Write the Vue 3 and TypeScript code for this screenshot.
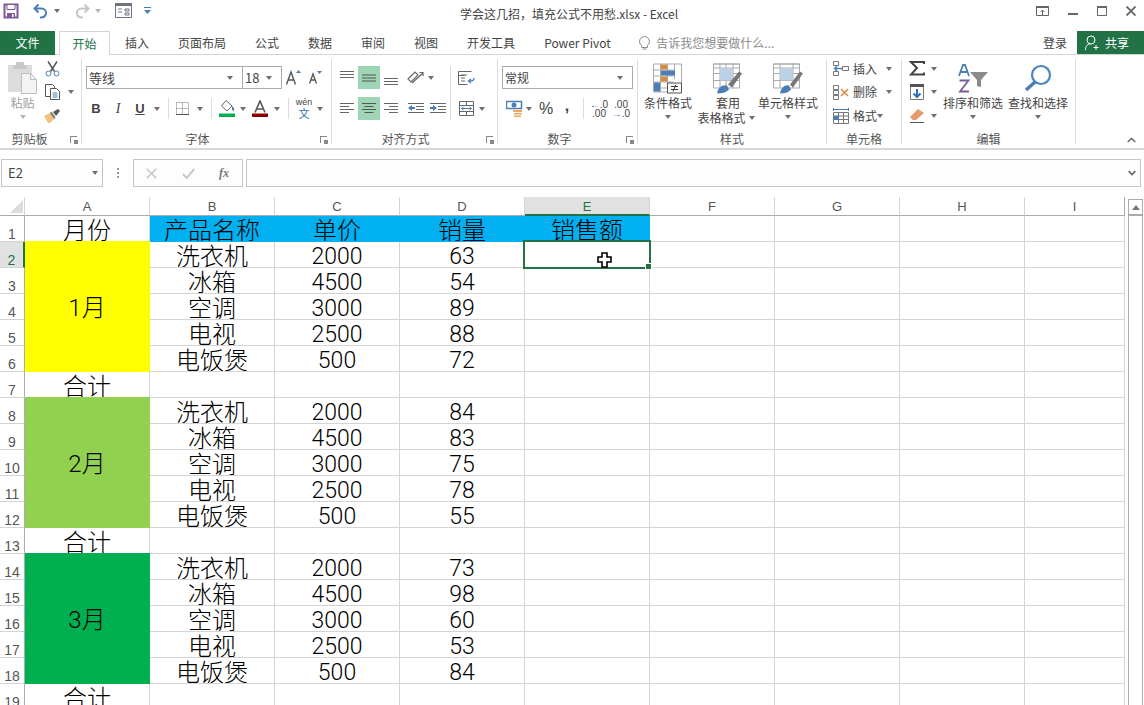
<script setup lang="ts">
interface Cell { t: string; cls: string }
const cols = ['A', 'B', 'C', 'D', 'E', 'F', 'G', 'H', 'I']
const goods = [['洗衣机', '2000'], ['冰箱', '4500'], ['空调', '3000'], ['电视', '2500'], ['电饭煲', '500']]
const sales = [[63, 54, 89, 88, 72], [84, 83, 75, 78, 55], [73, 98, 60, 53, 84]]
const fills = ['yellow', 'lime', 'green']
const rows: { n: number; cells: Cell[] }[] = []
const blank = (k: number): Cell[] => Array.from({ length: k }, () => ({ t: '', cls: '' }))
rows.push({
  n: 1,
  cells: [
    { t: '月份', cls: '' },
    { t: '产品名称', cls: 'blue' },
    { t: '单价', cls: 'blue' },
    { t: '销量', cls: 'blue' },
    { t: '销售额', cls: 'blue' },
    ...blank(4),
  ],
})
let n = 2
sales.forEach((m, i) => {
  m.forEach((s, j) => {
    const head: Cell[] = j === 0 ? [{ t: `${i + 1}月`, cls: `merged ${fills[i]}` }] : []
    rows.push({
      n: n,
      cells: [
        ...head,
        { t: goods[j][0], cls: '' },
        { t: goods[j][1], cls: 'num' },
        { t: String(s), cls: 'num' },
        { t: '', cls: n === 2 ? 'active' : '' },
        ...blank(4),
      ],
    })
    n++
  })
  rows.push({ n: n, cells: [{ t: '合计', cls: '' }, ...blank(8)] })
  n++
})
const tabs = ['插入', '页面布局', '公式', '数据', '审阅', '视图', '开发工具', 'Power Pivot']
</script>

<template>
  <div class="app">
    <header class="titlebar">
      <div class="qat">
        <svg class="q-save" width="16" height="16" viewBox="0 0 16 16"><path d="M1.500 1.500h13v13h-13z" fill="none" stroke="#7d5a94" stroke-width="2"/><path d="M4 1.500h8v5H4z" fill="#fff" stroke="#7d5a94"/><path d="M4 10h8v5H4z" fill="#7d5a94"/><path d="M9 11h1.600v3H9z" fill="#fff"/></svg>
        <svg class="q-undo" width="16" height="16" viewBox="0 0 16 16"><path d="M5.500 1.500 1.500 5.500l4 4M2 5.500h6.500c6 0 6 8.500 0 9H7" fill="none" stroke="#4a7eb5" stroke-width="2"/></svg>
        <i class="caret q-c1"></i>
        <svg class="q-redo" width="16" height="16" viewBox="0 0 16 16"><path d="M10.500 1.500l4 4-4 4M14 5.500H7.500c-6 0-6 8.500 0 9H9" fill="none" stroke="#c6c6c6" stroke-width="2"/></svg>
        <i class="caret light q-c2"></i>
        <svg class="q-form" width="17" height="15" viewBox="0 0 17 15"><path d="M.500.500h16v14H.500z" fill="#fff" stroke="#6b7480"/><path d="M0 0h17v3H0z" fill="#6b7480"/><path d="M3 6h4M3 9h4M10 6h4v2h-4zM10 10h4v2h-4z" fill="none" stroke="#6b7480"/></svg>
        <svg class="q-more" width="7" height="8" viewBox="0 0 7 8"><path d="M0 .500h7" stroke="#4a7eb5"/><path d="M0 3h7L3.500 7z" fill="#4a7eb5"/></svg>
      </div>
      <div class="title">学会这几招，填充公式不用愁.xlsx - Excel</div>
      <div class="winctl">
        <svg width="13" height="10" viewBox="0 0 13 10"><path d="M.500.500h12v9H.500z" fill="none" stroke="#666"/><path d="M0 0h13v2H0z" fill="#666"/><path d="M6.500 9V4M4.500 6l2-2 2 2" fill="none" stroke="#666"/></svg>
        <svg width="10" height="10" viewBox="0 0 10 10"><path d="M0 7h10v2H0z" fill="#666"/></svg>
        <svg width="10" height="10" viewBox="0 0 10 10"><path d="M.500.500h9v9h-9z" fill="none" stroke="#666"/><path d="M0 0h10v2H0z" fill="#666"/></svg>
        <svg width="10" height="10" viewBox="0 0 10 10"><path d="M.500.500l9 9M9.500.500l-9 9" fill="none" stroke="#666" stroke-width="1.800"/></svg>
      </div>
    </header>

    <nav class="tabbar">
      <div class="file">文件</div>
      <div class="tab on">开始</div>
      <div v-for="t in tabs" :key="t" class="tab">{{ t }}</div>
      <div class="tell">
        <svg width="11" height="14" viewBox="0 0 11 14"><path d="M5.500.500a5 5 0 0 0-3 9v2h6v-2a5 5 0 0 0-3-9zM3.500 13h4" fill="none" stroke="#8a8a8a"/></svg>
        <span>告诉我您想要做什么...</span>
      </div>
      <div class="login">登录</div>
      <div class="share">
        <svg width="15" height="16" viewBox="0 0 15 16"><circle cx="6" cy="5" r="4" fill="none" stroke="#fff"/><path d="M.500 15c0-4 2-6 5-6M11 10v5M8.500 12.500h5" fill="none" stroke="#fff"/></svg>
        <span>共享</span>
      </div>
    </nav>

    <section class="ribbon">
      <!-- clipboard -->
      <div class="group g-clip">
        <div class="body">
          <div class="big paste">
            <svg width="30" height="33" viewBox="0 0 30 33"><path d="M0 3h24v27H0z" fill="#dcdcdc"/><path d="M8 0h8v3h3v4H5V3h3z" fill="#c8c8c8"/><path d="M13.500 11.500h9l6 6v14h-15z" fill="#f3f3f3" stroke="#bdbdbd"/><path d="M22.500 11.500v6h6" fill="none" stroke="#bdbdbd"/></svg>
            <span class="muted">粘贴</span>
            <i class="caret light under"></i>
          </div>
          <div class="stack">
            <div class="row"><div class="w16">
              <svg width="15" height="16" viewBox="0 0 15 16"><path d="M3 .500l6.500 10M12 .500 5.500 10.500" stroke="#555" fill="none" stroke-width="1.500"/><circle cx="3.500" cy="12.500" r="2.500" fill="#fff" stroke="#4a7eb5"/><circle cx="11.500" cy="12.500" r="2.500" fill="#fff" stroke="#4a7eb5"/></svg>
            </div></div>
            <div class="row"><div class="w16">
              <svg width="15" height="16" viewBox="0 0 15 16"><path d="M.500.500h7l2 2v10H.500z" fill="#fff" stroke="#555"/><path d="M5.500 4.500h6l3 3v8h-9z" fill="#fff" stroke="#555"/><path d="M7.500 9h5M7.500 11h5M7.500 13h5" stroke="#4a7eb5"/></svg>
            </div><div class="w8"></div><i class="caret"></i></div>
            <div class="row"><div class="w16">
              <svg width="16" height="14" viewBox="0 0 16 14"><path d="M0 7l6-3 4 6-4 4H4z" fill="#f3c27d"/><path d="M6 4l4 6 1.500-1.500-4-6z" fill="#777"/><path d="M9 3l5-3 2 2-4 5z" fill="#555"/></svg>
            </div></div>
          </div>
        </div>
        <div class="label lb-clip">剪贴板</div>
        <i class="launch"></i>
      </div>

      <!-- font -->
      <div class="group g-font">
        <div class="body two">
          <div class="row h23">
            <div class="box fontname"><span>等线</span><i class="caret"></i></div>
            <div class="box fontsize"><span>18</span><i class="caret"></i></div>
            <div class="w22">
              <svg width="16" height="15" viewBox="0 0 16 15"><path d="M.500 14.500 5 2l4.500 12.500M2 10h6" fill="none" stroke="#555" stroke-width="1.400"/><path d="M10 3l2.500-3L15 3z" fill="#4a7eb5"/></svg>
            </div>
            <div class="w22">
              <svg width="14" height="13" viewBox="0 0 14 13"><path d="M.500 12.500 4 3l3.500 9.500M1.800 9h4.400" fill="none" stroke="#555" stroke-width="1.300"/><path d="M8 0h5l-2.500 3z" fill="#4a7eb5"/></svg>
            </div>
          </div>
          <div class="row h23 tools">
            <div class="w20 ch b">B</div>
            <div class="w24 ch i">I</div>
            <div class="w20 ch u">U</div>
            <div class="w14"><i class="caret"></i></div>
            <div class="w8"><i class="sep"></i></div>
            <div class="w20">
              <svg width="13" height="13" viewBox="0 0 13 13"><path d="M.500.500h12v12H.500zM6.500.500v12M.500 6.500h12" fill="none" stroke="#777" stroke-dasharray="1 1"/><path d="M0 12.500h13" stroke="#555"/></svg>
            </div>
            <div class="w16"><i class="caret"></i></div>
            <div class="w6"><i class="sep"></i></div>
            <div class="w26">
              <svg width="16" height="17" viewBox="0 0 16 17"><path d="M7 .500l6 5.500-5 5L2.500 6z" fill="#fff" stroke="#666"/><path d="M13 6c2 1 2.500 3 2 5l-2-1z" fill="#4a7eb5"/><path d="M0 13.500h16V17H0z" fill="#00b050"/></svg>
            </div>
            <div class="w6"><i class="caret"></i></div>
            <div class="w28">
              <svg width="16" height="17" viewBox="0 0 16 17"><path d="M3 12.500 8 1l5 11.500M4.500 9h7" fill="none" stroke="#555" stroke-width="1.600"/><path d="M0 13.500h16V17H0z" fill="#8b0000"/></svg>
            </div>
            <div class="w6"><i class="caret"></i></div>
            <div class="w16"><i class="sep"></i></div>
            <div class="w16 wen"><span>wén</span><b>文</b></div>
            <div class="w16"><i class="caret"></i></div>
          </div>
        </div>
        <div class="label lb-font">字体</div>
        <i class="launch"></i>
      </div>

      <!-- alignment -->
      <div class="group g-align">
        <div class="body split">
          <div class="two">
            <div class="row h23">
              <div class="w22"><svg width="14" height="14" viewBox="0 0 14 14"><path d="M0 .500h14M0 3.500h14M0 6.500h14" stroke="#666" fill="none"/></svg></div>
              <div class="w22 hl"><svg width="14" height="8" viewBox="0 0 14 8"><path d="M0 1h14M0 4h14M0 7h14" stroke="#555" fill="none"/></svg></div>
              <div class="w22"><svg width="14" height="14" viewBox="0 0 14 14"><path d="M0 7.500h14M0 10.500h14M0 13.500h14" stroke="#666" fill="none"/></svg></div>
              <div class="w26"><svg width="17" height="15" viewBox="0 0 17 15"><path d="M1 9l7-7 3 3-7 7zM5 13 16 3M12.500 2.500H16V6" fill="none" stroke="#666" stroke-width="1.200"/></svg></div>
              <div class="w6"><i class="caret"></i></div>
            </div>
            <div class="row h23">
              <div class="w22"><svg width="14" height="11" viewBox="0 0 14 11"><path d="M0 .500h14M0 3.500h9M0 6.500h14M0 9.500h9" stroke="#666" fill="none"/></svg></div>
              <div class="w22 hl"><svg width="14" height="11" viewBox="0 0 14 11"><path d="M0 .500h14M2.500 3.500h9M0 6.500h14M2.500 9.500h9" stroke="#555" fill="none"/></svg></div>
              <div class="w22"><svg width="14" height="11" viewBox="0 0 14 11"><path d="M0 .500h14M5 3.500h9M0 6.500h14M5 9.500h9" stroke="#666" fill="none"/></svg></div>
              <div class="w28"><svg width="16" height="11" viewBox="0 0 16 11"><path d="M0 .500h16M8 3.500h8M8 6.500h8M0 9.500h16" stroke="#666" fill="none"/><path d="M0 5l4-3v2h3v2H4v2z" fill="#4a7eb5"/></svg></div>
              <div class="w16"><svg width="16" height="11" viewBox="0 0 16 11"><path d="M0 .500h16M8 3.500h8M8 6.500h8M0 9.500h16" stroke="#666" fill="none"/><path d="M7 5 3 2v2H0v2h3v2z" fill="#4a7eb5"/></svg></div>
            </div>
          </div>
          <div class="w8 tall"><i class="sep long"></i></div>
          <div class="two">
            <div class="row h23">
              <div class="w24"><svg width="17" height="14" viewBox="0 0 17 14"><path d="M.500.500h13M.500 4.500h6M.500.500v13h9M3 4h6M3 7h4M3 10h4" fill="none" stroke="#666"/><path d="M16 7c0 3-2 3-5 3M13 8l-2.500 2 2.500 2" fill="none" stroke="#4a7eb5" stroke-width="1.300"/></svg></div>
            </div>
            <div class="row h23">
              <div class="w24"><svg width="15" height="15" viewBox="0 0 15 15"><path d="M.500.500h14v14H.500zM.500 4.500h14M.500 10.500h14M7.500.500v4M7.500 10.500v4" fill="none" stroke="#666"/><path d="M2.500 7.500h10M4.500 6l-2 1.500 2 1.500M10.500 6l2 1.500-2 1.500" fill="none" stroke="#4a7eb5"/></svg></div>
              <div class="w8"><i class="caret"></i></div>
            </div>
          </div>
        </div>
        <div class="label lb-align">对齐方式</div>
        <i class="launch"></i>
      </div>

      <!-- number -->
      <div class="group g-num">
        <div class="body two">
          <div class="row h23">
            <div class="box numfmt"><span>常规</span><i class="caret"></i></div>
          </div>
          <div class="row h23">
            <div class="w24"><svg width="17" height="17" viewBox="0 0 17 17"><path d="M.500 1.500h15v7H.500z" fill="#fff" stroke="#4a7eb5" stroke-width="1.500"/><circle cx="8" cy="5" r="2.500" fill="#4a7eb5"/><path d="M7 10h9v2H7zM8 13h8v1.500H8zM8 15.500h7V17H8z" fill="#f0a860"/></svg></div>
            <div class="w6"><i class="caret"></i></div>
            <div class="w28 pct">%</div>
            <div class="w14 comma">,</div>
            <div class="w18"><i class="sep"></i></div>
            <div class="w14 dec"><span><em>←</em>.0</span><span>.00</span></div>
            <div class="w8"></div>
            <div class="w14 dec"><span>.00</span><span><em>→</em>.0</span></div>
          </div>
        </div>
        <div class="label lb-num">数字</div>
        <i class="launch"></i>
      </div>

      <!-- styles -->
      <div class="group g-style">
        <div class="body">
          <div class="big w60">
            <svg width="30" height="30" viewBox="0 0 30 30"><path d="M.500.500h28v28H.500zM.500 6.500h20M.500 12.500h20M.500 18.500h20M.500 24.500h20M7.500.500v28M14.500.500v20M21.500.500v15" fill="none" stroke="#aaa"/><path d="M8 1h6v5H8zM8 13h6v5H8z" fill="#d98b3a"/><path d="M8 7h14v5H8zM1 19h6v9H1z" fill="#4a7eb5"/><path d="M14.500 19.500h14v10h-14z" fill="#fff" stroke="#555"/><path d="M18 23h7M18 26h7M23 21l-3 7" fill="none" stroke="#333"/></svg>
            <span>条件格式</span>
            <i class="caret under"></i>
          </div>
          <div class="big w60">
            <svg width="30" height="30" viewBox="0 0 30 30"><path d="M.500.500h26v24H.500z" fill="#fff" stroke="#aaa"/><path d="M.500.500h26v4H.500zM.500 10h26M.500 17h26M7 .500v24M13 .500v24M20 .500v24" fill="none" stroke="#aaa"/><path d="M7 5h13v12H7z" fill="#bcd0e6"/><path d="M4 30c1-6 5-9 10-8l2 4c-3 3-7 4-12 4z" fill="#4a7eb5"/><path d="M15 21 26 8l3 2-10 14z" fill="#777"/></svg>
            <span>套用</span>
            <span class="wrapc">表格格式<i class="caret"></i></span>
          </div>
          <div class="big w60">
            <svg width="30" height="30" viewBox="0 0 30 30"><path d="M.500.500h26v24H.500z" fill="#fff" stroke="#aaa"/><path d="M.500.500h26v4H.500zM.500 10h26M.500 17h26M7 .500v24M20 .500v24" fill="none" stroke="#aaa"/><path d="M7 5h13v12H7z" fill="#bcd0e6"/><path d="M7 30c1-6 5-9 9-8l2 4c-3 3-6 4-11 4z" fill="#4a7eb5"/><path d="M17 21 27 8l3 2-10 14z" fill="#777"/></svg>
            <span>单元格样式</span>
            <i class="caret under"></i>
          </div>
        </div>
        <div class="label">样式</div>
      </div>

      <!-- cells -->
      <div class="group g-cells">
        <div class="body">
          <div class="stack wide">
            <div class="row"><svg width="16" height="15" viewBox="0 0 16 15"><path d="M.500.500h5v4h-5zM.500 10.500h5v4h-5zM9.500 5.500h6v4h-6z" fill="#fff" stroke="#777"/><path d="M9 7.500H2M4 5 1.500 7.500 4 10" fill="none" stroke="#4a7eb5" stroke-width="1.400"/></svg><span class="txt">插入</span><i class="caret"></i></div>
            <div class="row"><svg width="16" height="15" viewBox="0 0 16 15"><path d="M.500.500h5v4h-5zM.500 10.500h5v4h-5zM.500 5.500h5v4h-5z" fill="#fff" stroke="#777"/><path d="M8 4l7 7M15 4l-7 7" fill="none" stroke="#dd8a4a" stroke-width="1.600"/></svg><span class="txt">删除</span><i class="caret"></i></div>
            <div class="row"><svg width="16" height="16" viewBox="0 0 16 16"><path d="M.500 4.500h15v11H.500zM.500 8h15M.500 11.500h15M5.500 4.500v11M10.500 4.500v11" fill="none" stroke="#777"/><path d="M1 8h5v4H1z" fill="#4a7eb5"/><path d="M.500 1.500h15M.500 0v3M15.500 0v3" stroke="#4a7eb5" fill="none"/></svg><span class="txt">格式</span><i class="caret narrow"></i></div>
          </div>
        </div>
        <div class="label">单元格</div>
      </div>

      <!-- editing -->
      <div class="group g-edit">
        <div class="body">
          <div class="stack short">
            <div class="row"><div class="w20"><svg width="16" height="15" viewBox="0 0 16 15"><path d="M15 3V1H2l6 6-6 6.500h13v-2" fill="none" stroke="#444" stroke-width="2"/></svg></div><div class="w14c"><i class="caret"></i></div></div>
            <div class="row"><div class="w20"><svg width="14" height="16" viewBox="0 0 14 16"><path d="M.500.500h13v15H.500z" fill="#fff" stroke="#777"/><path d="M0 0h14v3H0z" fill="#555"/><path d="M7 5v8M3.500 9.500 7 13l3.500-3.500" fill="none" stroke="#2f70b8" stroke-width="2"/></svg></div><div class="w14c"><i class="caret"></i></div></div>
            <div class="row"><div class="w20"><svg width="15" height="14" viewBox="0 0 15 14"><path d="M0 8l8-8 6 4-8 7H3z" fill="#e59a6c"/><path d="M0 13.500h14" stroke="#555"/></svg></div><div class="w14c"><i class="caret"></i></div></div>
          </div>
          <div class="big w60 sort">
            <svg width="30" height="29" viewBox="0 0 30 29"><path d="M1 12 5 1h2l4 11M3 8h6" fill="none" stroke="#4a7eb5" stroke-width="1.800"/><path d="M1.500 16.500h9L2 27.500h9" fill="none" stroke="#7d5a94" stroke-width="1.800"/><path d="M12 8h18l-7 8v7l-4-1v-6z" fill="#8a8a8a"/></svg>
            <span>排序和筛选</span>
            <i class="caret under"></i>
          </div>
          <div class="big w60 find">
            <svg width="28" height="29" viewBox="0 0 28 29"><circle cx="17" cy="11" r="9" fill="none" stroke="#4a87c0" stroke-width="2.200"/><path d="M11 18 2 26" stroke="#4a7eb5" stroke-width="3.500"/></svg>
            <span>查找和选择</span>
            <i class="caret under"></i>
          </div>
        </div>
        <div class="label">编辑</div>
      </div>

      <svg class="collapse" width="9" height="6" viewBox="0 0 9 6"><path d="M.700 5 4.500 1.500 8.300 5" fill="none" stroke="#666" stroke-width="1.500"/></svg>
    </section>

    <section class="fbar">
      <div class="namebox"><span>E2</span><i class="caret"></i></div>
      <div class="dots"><i></i><i></i><i></i></div>
      <div class="fbtns">
        <svg width="11" height="11" viewBox="0 0 11 11"><path d="M.700.700l9.600 9.600M10.300.700.700 10.300" stroke="#c8c8c8" stroke-width="1.600" fill="none"/></svg>
        <svg width="13" height="11" viewBox="0 0 13 11"><path d="M.800 6l4 4L12.300.800" stroke="#c8c8c8" stroke-width="2" fill="none"/></svg>
        <span class="fx">fx</span>
      </div>
      <div class="finput">
        <svg width="8" height="6" viewBox="0 0 8 6"><path d="M.700 1 4 4.500 7.300 1" fill="none" stroke="#666" stroke-width="1.800"/></svg>
      </div>
    </section>

    <section class="sheet">
      <div class="grid">
        <div class="hd corner"><svg width="13" height="13" viewBox="0 0 13 13"><path d="M13 0v13H0z" fill="#dcdcdc"/></svg></div>
        <div v-for="c in cols" :key="c" class="hd col" :class="{ cur: c === 'E' }">{{ c }}</div>
        <template v-for="r in rows" :key="r.n">
          <div class="hd rown" :class="{ cur: r.n === 2 }">{{ r.n }}</div>
          <div v-for="(c, i) in r.cells" :key="i" class="cell" :class="c.cls">
            <span>{{ c.t }}</span>
            <template v-if="c.cls === 'active'">
              <div class="selbox"><i class="handle"></i></div>
              <svg class="xhair" width="15" height="16" viewBox="0 0 15 16"><path d="M5 1h5v4h4v5h-4v5H5v-5H1V5h4z" fill="#fff" stroke="#000" stroke-width="1.600"/></svg>
            </template>
          </div>
        </template>
      </div>
      <aside class="vscroll">
        <div class="up"><i></i></div>
      </aside>
    </section>
  </div>
</template>

<style scoped>
.app {
  width: 1144px;
  height: 705px;
  overflow: hidden;
  background: #fff;
  color: #444;
  font: 12px/16px "Noto Sans CJK SC", "Liberation Sans", sans-serif;
  position: relative;
}
i, em { font-style: normal; display: block; }
.caret { width: 0; height: 0; border-style: solid; border-width: 4px 3.500px 0; border-color: #6f6f6f transparent transparent; flex: none; }
.caret.light { border-top-color: #b5b5b5; }
.titlebar { height: 31px; display: flex; position: relative; }
.qat { display: flex; align-items: center; height: 21px; padding-left: 3px; }
.qat svg, .qat i { flex: none; }
.q-undo { margin-left: 14px; }
.q-c1 { margin-left: 5px; }
.q-redo { margin-left: 14px; }
.q-c2 { margin-left: 5px; }
.q-form { margin-left: 14px; }
.q-more { margin-left: 12px; }
.title { position: absolute; left: 460px; top: 6px; color: #444; white-space: nowrap; }
.winctl { margin-left: auto; display: flex; align-items: flex-start; gap: 19px; padding: 6px 8px 0 0; }
.tabbar { height: 23px; display: flex; border-bottom: 1px solid #d4d4d4; box-sizing: content-box; align-items: stretch; line-height: 24px; }
.file { width: 55px; background: #217346; color: #fff; text-align: center; height: 24px; }
.tab { padding: 0 14.500px; white-space: nowrap; }
.tab.on { margin-left: 4px; margin-right: 0.500px; padding: 0 12.500px; border: 1px solid #d4d4d4; border-bottom: 0; background: #fff; color: #217346; height: 24px; line-height: 23px; box-sizing: border-box; }
.tell { display: flex; align-items: center; gap: 6px; color: #8a8a8a; margin-left: 14px; }
.login { margin-left: auto; margin-right: 10px; }
.share { width: 67px; height: 23px; background: #217346; color: #fff; display: flex; align-items: center; gap: 5px; padding-left: 8px; box-sizing: border-box; }
.ribbon { height: 93px; border-bottom: 2px solid #d6d6d6; display: flex; box-sizing: content-box; position: relative; }
.group { position: relative; margin-top: 4px; height: 85px; border-right: 1px solid #dcdcdc; box-sizing: border-box; flex: none; }
.g-clip { width: 82px; }
.g-font { width: 250px; }
.g-align { width: 166px; }
.g-num { width: 140px; }
.g-style { width: 189px; }
.g-cells { width: 75px; }
.g-edit { width: 174px; }
.body { height: 72px; display: flex; }
.label { position: absolute; left: 0; right: 0; top: 73px; height: 14px; line-height: 14px; text-align: center; color: #555; }
.lb-clip { right: 22px; }
.lb-font { right: 18px; }
.lb-align { right: 18px; }
.lb-num { right: 16px; }
.launch { position: absolute; right: 4px; top: 77px; width: 7px; height: 7px; border-left: 1px solid #888; border-top: 1px solid #888; box-sizing: border-box; }
.launch::after { content: ""; position: absolute; right: -1px; bottom: -1px; width: 4px; height: 4px; background: #888; }
.row { display: flex; align-items: center; flex: none; }
.h23 { height: 23px; }
.two { flex-direction: column; display: flex; gap: 8px; padding-top: 7px; height: auto; }
.g-font .two { padding-left: 4px; }
.g-num .two { padding-left: 4px; }
.split { display: flex; padding-left: 4px; }
.w6, .w8, .w14, .w16, .w18, .w20, .w22, .w24, .w26, .w28 { display: flex; justify-content: center; align-items: center; flex: none; height: 23px; }
.w6 { width: 6px; } .w8 { width: 8px; } .w14 { width: 14px; } .w16 { width: 16px; } .w18 { width: 18px; } .w20 { width: 20px; } .w22 { width: 22px; } .w24 { width: 24px; } .w26 { width: 26px; } .w28 { width: 28px; }
.stack .w16, .stack .w20 { height: 23.500px; }
.hl { background: #9fd5b7; }
.sep { width: 1px; height: 21px; background: #dcdcdc; }
.tall { height: auto; padding-top: 7px; align-items: flex-start; }
.sep.long { height: 54px; }
.box { border: 1px solid #ababab; height: 23px; box-sizing: border-box; display: flex; align-items: center; justify-content: space-between; padding: 0 9px 0 2px; background: #fff; font-size: 13px; flex: none; }
.fontname { width: 157px; }
.fontsize { width: 40px; margin-left: -1px; margin-right: 1px; }
.numfmt { width: 131px; font-size: 12px; }
.ch { font: 13px "Liberation Sans", sans-serif; color: #444; }
.ch.b { font-weight: 700; }
.ch.i { font-family: "Liberation Serif", serif; font-style: italic; font-size: 14px; }
.ch.u { text-decoration: underline; font-weight: 700; }
.wen { flex-direction: column; gap: 1px; font: 9px/9px "Liberation Sans", sans-serif; }
.wen b { font: 400 11px/11px "Noto Sans CJK SC", sans-serif; color: #2f70b8; }
.pct { font: 16px "Liberation Sans", sans-serif; color: #444; }
.comma { font: 700 16px "Liberation Sans", sans-serif; padding-bottom: 6px; box-sizing: border-box; }
.dec { flex-direction: column; font: 10px/9px "Liberation Sans", sans-serif; white-space: nowrap; }
.dec span { display: flex; }
.dec em { color: #2f70b8; font-weight: 700; }
.big { display: flex; flex-direction: column; align-items: center; flex: none; white-space: nowrap; line-height: 15px; padding-top: 3px; color: #444; }
.big svg { height: 33px; flex: none; }
.under { margin-top: 5px; }
.paste { width: 33px; margin-left: 6px; }
.muted { color: #a0a0a0; }
.w60 { width: 60px; }
.wrapc { display: flex; align-items: center; gap: 3px; margin-left: -4px; }
.stack { display: grid; grid-auto-rows: 23.500px; margin: -2px 0 0 5px; align-content: start; }
.stack.wide { margin-left: 6px; width: 68px; }
.stack.wide .row svg { flex: none; }
.stack.wide .txt { margin-left: 4px; width: 33px; }
.stack.wide .caret.narrow { margin-left: -9px; }
.stack.short { width: 36px; }
.w14c { width: 14px; display: flex; justify-content: center; }
.find { margin-left: 5px; }
.collapse { position: absolute; left: 1127px; top: 82px; }
.fbar { height: 28px; margin-top: 9px; display: flex; align-items: stretch; }
.namebox { width: 102px; margin-left: 1px; border: 1px solid #c6c6c6; box-sizing: border-box; display: flex; align-items: center; justify-content: space-between; padding: 0 4px 0 6px; font-size: 13px; background: #fdfdfd; }
.dots { width: 30px; display: flex; flex-direction: column; align-items: center; justify-content: center; gap: 2px; }
.dots i { width: 2px; height: 2px; background: #999; }
.fbtns { width: 110px; border: 1px solid #c6c6c6; box-sizing: border-box; display: flex; align-items: center; gap: 25px; padding-left: 12px; background: #fdfdfd; }
.fx { font: italic 700 12px "Liberation Serif", serif; color: #777; margin-left: -1px; }
.finput { width: 895px; margin-left: 3px; border: 1px solid #c6c6c6; box-sizing: border-box; background: #fdfdfd; display: flex; align-items: center; justify-content: flex-end; padding-right: 4px; }
.sheet { margin-top: 10px; display: flex; height: 508px; overflow: hidden; }
.grid { display: grid; grid-template-columns: 25px repeat(8, 125px) 100px; grid-template-rows: 19px; grid-auto-rows: 26px; width: 1125px; flex: none; }
.hd { box-sizing: border-box; background: #fff; color: #555; display: flex; align-items: center; justify-content: center; font: 13px "Liberation Sans", sans-serif; }
.corner { border-right: 1px solid #d4d4d4; border-bottom: 1px solid #ababab; justify-content: flex-end; align-items: flex-end; padding: 0 1px 2px 0; }
.col { border-right: 1px solid #d4d4d4; border-bottom: 1px solid #ababab; font-size: 13px; padding-top: 1px; }
.col:nth-child(10) { border-right: 1px solid #ababab; }
.col.cur { background: #e1e1e1; color: #217346; border-bottom: 2px solid #217346; }
.rown { border-right: 1px solid #ababab; border-bottom: 1px solid #d4d4d4; align-items: flex-end; font-size: 14px; line-height: 13px; padding-bottom: 0; }
.rown.cur { background: #e1e1e1; color: #217346; border-right: 2px solid #217346; }
.cell { box-sizing: border-box; border-right: 1px solid #d4d4d4; border-bottom: 1px solid #d4d4d4; text-align: center; font: 300 24px/26px Roboto, "Noto Sans CJK SC", sans-serif; color: #000; overflow: hidden; position: relative; white-space: nowrap; }
.cell span { display: block; margin-top: 2px; }
.cell.num { font-size: 23px; }
.cell.blue { background: #00b0f0; border-color: #00b0f0; }
.cell.merged { grid-row: span 5; display: flex; align-items: center; justify-content: center; margin-top: -1px; }
.cell.merged span { margin-top: 4px; }
.cell.yellow { background: #ff0; border-color: #ff0; }
.cell.lime { background: #92d050; border-color: #92d050; }
.cell.green { background: #00b050; border-color: #00b050; }
.cell.active { overflow: visible; z-index: 2; }
.selbox { position: absolute; left: -2px; top: -2px; width: 128px; height: 29px; border: 2px solid #217346; box-sizing: border-box; }
.handle { position: absolute; right: -3px; bottom: -3px; width: 5px; height: 5px; background: #217346; border: 1px solid #fff; box-sizing: content-box; }
.xhair { position: absolute; left: 72px; top: 10px; }
.vscroll { margin: 2px 0 0 3px; width: 15px; border: 1px solid #ababab; border-bottom: 0; box-sizing: border-box; background: #fff; }
.up { height: 14px; border-bottom: 2px solid #ababab; display: flex; align-items: center; justify-content: center; }
.up i { width: 0; height: 0; border-style: solid; border-width: 0 4px 5px; border-color: transparent transparent #777; }
</style>

<style>
html, body { margin: 0; overflow: hidden; background: #fff; }
</style>
